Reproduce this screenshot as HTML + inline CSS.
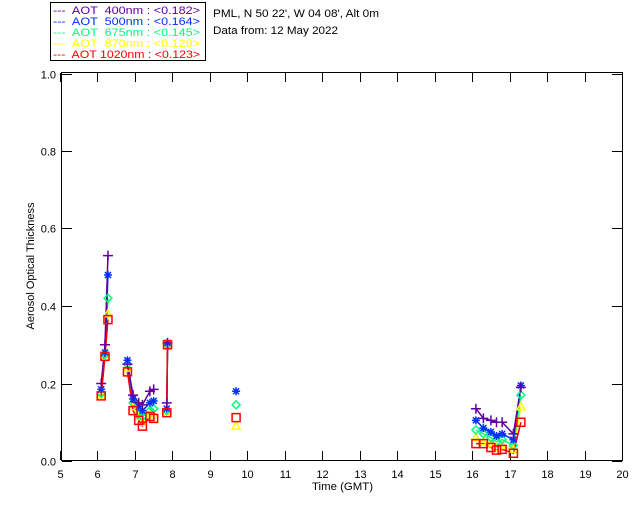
<!DOCTYPE html><html><head><style>body{margin:0;background:#fff}svg{display:block}text{font-family:"Liberation Sans",sans-serif;font-size:11px;white-space:pre}</style></head><body>
<svg id="s" width="640" height="512" xmlns="http://www.w3.org/2000/svg">
<rect x="50.5" y="2.5" width="155" height="58" fill="none" stroke="#000"/>
<g font-size="11">
<text x="53" y="14" fill="#6000a0" textLength="147" lengthAdjust="spacingAndGlyphs">---  AOT  400nm : &lt;0.182&gt;</text>
<text x="53" y="25" fill="#0030ff" textLength="147" lengthAdjust="spacingAndGlyphs">---  AOT  500nm : &lt;0.164&gt;</text>
<text x="53" y="36" fill="#00ff80" textLength="147" lengthAdjust="spacingAndGlyphs">---  AOT  675nm : &lt;0.145&gt;</text>
<text x="53" y="47" fill="#ffff00" textLength="147" lengthAdjust="spacingAndGlyphs">---  AOT  870nm : &lt;0.129&gt;</text>
<text x="53" y="58" fill="#ff0000" textLength="147" lengthAdjust="spacingAndGlyphs">---  AOT 1020nm : &lt;0.123&gt;</text>
<text x="213" y="17" textLength="166" lengthAdjust="spacingAndGlyphs">PML, N 50 22', W 04 08', Alt 0m</text>
<text x="213" y="34" textLength="125" lengthAdjust="spacingAndGlyphs">Data from: 12 May 2022</text>
<text x="312" y="490" textLength="61" lengthAdjust="spacingAndGlyphs">Time (GMT)</text>
<text transform="translate(34,266) rotate(-90)" text-anchor="middle" font-size="10">Aerosol Optical Thickness</text>
</g>
<rect x="61.5" y="72.5" width="561" height="388" fill="none" stroke="#000"/>
<g id="ax" stroke="#000"></g><g id="lb"></g><g id="d"></g>
</svg>
<script>
var X=function(t){return 60+(t-5)*37.47},Y=function(v){return 461-v*387.5},ns="http://www.w3.org/2000/svg";
function el(p,n,a,txt){var e=document.createElementNS(ns,n);for(var k in a)e.setAttribute(k,a[k]);if(txt)e.textContent=txt;document.getElementById(p).appendChild(e);return e}
for(var h=5;h<=20;h++){var x=Math.round(X(h))+.5;el("ax","line",{x1:x,x2:x,y1:460,y2:451});el("ax","line",{x1:x,x2:x,y1:73,y2:82});el("lb","text",{x:x,y:478,"text-anchor":"middle"},""+h)}
for(var i=0;i<=5;i++){var y=Math.round(Y(i*.2))+.5;el("ax","line",{x1:62,x2:72,y1:y,y2:y});el("ax","line",{x1:612,x2:622,y1:y,y2:y});el("lb","text",{x:56,y:y+4,"text-anchor":"end"},(i*.2).toFixed(1))}
var T=[[6.1,6.2,6.28],[6.8,6.95,7.1,7.2,7.4,7.5],[7.85,7.87],[9.7],[16.1,16.3,16.5,16.65,16.8,17.1,17.3]];
var D={p:[[.2,.3,.53],[.25,.17,.15,.145,.18,.185],[.15,.305],[null],[.135,.11,.105,.1,.1,.07,.19]],
b:[[.185,.28,.48],[.26,.16,.14,.13,.15,.155],[.135,.305],[.18],[.105,.085,.075,.065,.07,.055,.195]],
g:[[.175,.275,.42],[.25,.15,.12,.115,.13,.135],[.13,.3],[.145],[.08,.07,.06,.05,.055,.04,.17]],
y:[[.17,.27,.38],[.24,.14,.115,.1,.12,.12],[.128,.3],[.09],[.06,.05,.045,.035,.04,.03,.14]],
r:[[.168,.27,.365],[.23,.13,.105,.09,.115,.11],[.125,.3],[.112],[.045,.045,.035,.028,.03,.02,.1]]};
var C={p:"#6000a0",b:"#0030ff",g:"#00ff80",y:"#ffff00",r:"#ff0000"};
var K=["y","g","b","p","r"];
K.forEach(function(k){D[k].forEach(function(s,j){var pts=[];s.forEach(function(v,i){if(v!=null)pts.push(X(T[j][i])+","+Y(v))});if(pts.length>1)el("d","polyline",{points:pts.join(" "),fill:"none",stroke:C[k],"stroke-width":1.5})})});
K.forEach(function(k){D[k].forEach(function(s,j){s.forEach(function(v,i){if(v==null)return;var x=X(T[j][i]),y=Y(v),c=C[k],d="";
if(k=="p")d="M"+(x-5)+" "+y+"h10M"+x+" "+(y-5)+"v10";
if(k=="b")d="M"+(x-4)+" "+y+"h8M"+x+" "+(y-4)+"v8M"+(x-3)+" "+(y-3)+"l6 6M"+(x-3)+" "+(y+3)+"l6 -6";
if(k=="g")d="M"+x+" "+(y-4)+"l4 4l-4 4l-4 -4z";
if(k=="y")d="M"+x+" "+(y-4)+"l4 7h-8z";
if(k=="r")d="M"+(x-4)+" "+(y-4)+"h8v8h-8z";
el("d","path",{d:d,stroke:c,fill:"none","stroke-width":1.5});})})});
</script></body></html>
